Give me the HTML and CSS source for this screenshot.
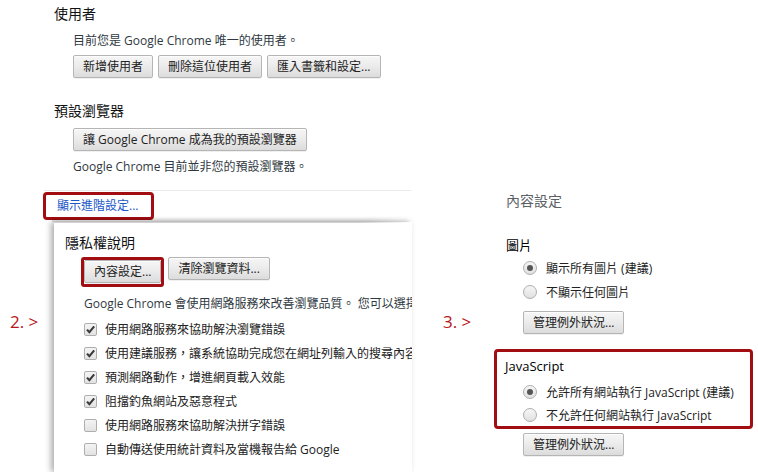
FILE: index.html
```html
<!DOCTYPE html>
<html lang="zh-Hant">
<head>
<meta charset="utf-8">
<link rel="stylesheet" href="styles.css">
</head>
<body>
<div class="page">
  <div class="left">
    <section class="top">
      <h3 class="h3 h-user">使用者</h3>
      <div class="indent">
        <p class="line l-only">目前您是 Google Chrome 唯一的使用者。</p>
        <div class="btnrow">
          <button class="btn">新增使用者</button>
          <button class="btn">刪除這位使用者</button>
          <button class="btn">匯入書籤和設定...</button>
        </div>
      </div>
      <h3 class="h3 h-default">預設瀏覽器</h3>
      <div class="indent">
        <button class="btn b-default">讓 Google Chrome 成為我的預設瀏覽器</button>
        <p class="line l-notdefault">Google Chrome 目前並非您的預設瀏覽器。</p>
      </div>
    </section>
    <div class="sep"></div>
    <div class="adv"><span class="hl-box"><a class="link">顯示進階設定...</a></span></div>
    <div class="lower">
      <div class="step step2">2. &gt;</div>
      <div class="panel">
        <h3 class="h3 h-privacy">隱私權說明</h3>
        <div class="pindent">
          <div class="btnrow2">
            <span class="hl-btn"><button class="btn">內容設定...</button></span>
            <button class="btn">清除瀏覽資料...</button>
          </div>
          <p class="line l-para">Google Chrome 會使用網路服務來改善瀏覽品質。 您可以選擇</p>
          <ul class="checks">
            <li class="chk"><span class="cb on"><svg viewBox="0 0 13 13" width="13" height="13"><path d="M3 6.6 L5.4 9.2 L10.2 3.4" fill="none" stroke="#3a3a3a" stroke-width="2.1"/></svg></span>使用網路服務來協助解決瀏覽錯誤</li>
            <li class="chk"><span class="cb on"><svg viewBox="0 0 13 13" width="13" height="13"><path d="M3 6.6 L5.4 9.2 L10.2 3.4" fill="none" stroke="#3a3a3a" stroke-width="2.1"/></svg></span>使用建議服務，讓系統協助完成您在網址列輸入的搜尋內容</li>
            <li class="chk"><span class="cb on"><svg viewBox="0 0 13 13" width="13" height="13"><path d="M3 6.6 L5.4 9.2 L10.2 3.4" fill="none" stroke="#3a3a3a" stroke-width="2.1"/></svg></span>預測網路動作，增進網頁載入效能</li>
            <li class="chk"><span class="cb on"><svg viewBox="0 0 13 13" width="13" height="13"><path d="M3 6.6 L5.4 9.2 L10.2 3.4" fill="none" stroke="#3a3a3a" stroke-width="2.1"/></svg></span>阻擋釣魚網站及惡意程式</li>
            <li class="chk"><span class="cb"></span>使用網路服務來協助解決拼字錯誤</li>
            <li class="chk"><span class="cb"></span>自動傳送使用統計資料及當機報告給 Google</li>
          </ul>
        </div>
      </div>
    </div>
  </div>
  <div class="right">
    <div class="step step3">3. &gt;</div>
    <div class="content">
      <h1 class="title">內容設定</h1>
      <div class="group g-img">
        <h4 class="h4">圖片</h4>
        <div class="radios">
          <div class="radio"><span class="rb on"></span>顯示所有圖片 (建議)</div>
          <div class="radio"><span class="rb"></span>不顯示任何圖片</div>
        </div>
        <button class="btn b-manage">管理例外狀況...</button>
      </div>
      <div class="hl-group">
        <h4 class="h4 h-js">JavaScript</h4>
        <div class="radios">
          <div class="radio r-js"><span class="rb on"></span>允許所有網站執行 JavaScript (建議)</div>
          <div class="radio r-js"><span class="rb"></span>不允許任何網站執行 JavaScript</div>
        </div>
      </div>
      <div class="manage2"><button class="btn">管理例外狀況...</button></div>
    </div>
  </div>
</div>
</body>
</html>
```
FILE: styles.css
```css
* { box-sizing: border-box; }
html, body { margin: 0; padding: 0; background: #fff; }
body {
  width: 758px;
  height: 472px;
  overflow: hidden;
  font-family: "Open Sans", "Noto Sans CJK TC", sans-serif;
  font-size: 12px;
  color: #303942;
}
p, h1, h3, h4, ul { margin: 0; padding: 0; font-weight: normal; }
ul { list-style: none; }

.page { display: flex; height: 472px; }
.left { width: 430px; flex: none; display: flex; flex-direction: column; }
.right { flex: 1; display: flex; padding-top: 191px; }

/* top section */
.top { padding-left: 54px; }
.h3 { font-size: 14px; line-height: 20px; color: #111; }
.h-user { margin-top: 4px; }
.indent { padding-left: 19px; }
.line { line-height: 18px; white-space: nowrap; }
.l-only { margin-top: 8px; }
.btnrow { display: flex; gap: 5px; margin-top: 5px; }
.h-default { margin-top: 23px; }
.b-default { margin-top: 7px; }
.l-notdefault { margin-top: 7px; }

.btn {
  font-family: "Open Sans", "Noto Sans CJK TC", sans-serif;
  font-size: 12px;
  height: 23px;
  line-height: 21px;
  padding: 0 9px;
  color: #222;
  border: 1px solid #b5b5b5;
  border-radius: 2px;
  background: linear-gradient(#f6f6f6, #ececec 45%, #dcdcdc);
  box-shadow: 0 1px 0 rgba(0,0,0,0.06), inset 0 1px 1px rgba(255,255,255,0.8);
  white-space: nowrap;
  display: block;
}

.sep { height: 1px; background: #eaeaea; margin: 14px 19px 0 44px; }
.adv { padding-left: 43px; margin-top: 1px; }
.hl-box {
  display: inline-block;
  width: 111px;
  height: 28px;
  border: 3px solid #a20d12;
  border-radius: 4px;
  padding-left: 11px;
  line-height: 21px;
}
.link { color: #1a56c8; font-size: 12px; white-space: nowrap; }

/* lower panel */
.lower { display: flex; margin-top: 2px; flex: 1; }
.step {
  color: #b8141c;
  font-family: "Open Sans", sans-serif;
  font-size: 17px;
  line-height: 20px;
  white-space: nowrap;
}
.step2 { width: 54px; flex: none; padding: 90px 0 0 10px; }
.panel {
  width: 358px;
  flex: none;
  background: #fff;
  overflow: hidden;
  padding: 11px 0 0 11px;
  box-shadow: -3px 0 6px rgba(0,0,0,0.32);
  position: relative;
}
.panel::before {
  content: "";
  position: absolute;
  left: 0; top: 0;
  width: 100%; height: 1px;
  background: linear-gradient(90deg, rgba(0,0,0,0.18), rgba(0,0,0,0.18) 85%, rgba(0,0,0,0));
}
.lower { position: relative; }
.lower::before {
  content: "";
  position: absolute;
  left: 52px; top: -5px;
  width: 360px; height: 5px;
  background: linear-gradient(rgba(0,0,0,0), rgba(0,0,0,0.14));
  -webkit-mask-image: linear-gradient(90deg, #000 88%, transparent);
  mask-image: linear-gradient(90deg, #000 88%, transparent);
}
.pindent { padding-left: 19px; }
.h-privacy { white-space: nowrap; }
.btnrow2 { display: flex; align-items: flex-start; gap: 4px; margin: 4px 0 0 -3px; }
.hl-btn {
  display: block;
  border: 3px solid #a20d12;
  border-radius: 3px;
  padding-bottom: 1px;
}
.l-para { margin-top: 8px; }
.checks { margin-top: 4px; }
.chk { display: flex; align-items: center; height: 24px; white-space: nowrap; color: #222; }
.cb {
  width: 13px; height: 13px; flex: none;
  border: 1px solid #aeaeae;
  border-radius: 2px;
  background: linear-gradient(#f4f4f4, #e2e2e2);
  margin-right: 8px;
  position: relative;
}
.cb svg { position: absolute; left: -1px; top: -1px; }

/* right */
.step3 { width: 64px; flex: none; padding: 121px 0 0 13px; }
.content { width: 259px; flex: none; }
.title { font-size: 14px; line-height: 20px; color: #5c6166; padding-left: 12px; }
.g-img { padding-left: 12px; margin-top: 25px; }
.h4 { font-size: 13px; line-height: 18px; color: #000; }
.radios { margin-top: 2px; padding-left: 17px; }
.radio { display: flex; align-items: center; height: 24px; white-space: nowrap; color: #222; }
.rb {
  width: 14px; height: 14px; flex: none;
  border: 1px solid #aeaeae;
  border-radius: 50%;
  background: linear-gradient(#f6f6f6, #e0e0e0);
  margin-right: 9px;
  position: relative;
}
.rb.on::after {
  content: "";
  position: absolute;
  left: 3px; top: 3px;
  width: 6px; height: 6px;
  border-radius: 50%;
  background: #555;
}
.b-manage { margin: 7px 0 0 17px; }
.hl-group {
  margin-top: 15px;
  height: 80px;
  border: 3px solid #a20d12;
  border-radius: 4px;
  padding: 5px 0 0 8px;
}
.hl-group .radios { margin-top: 5px; padding-left: 18px; }
.r-js { height: 23px; }
.manage2 { padding-left: 29px; margin-top: 4px; }
```
